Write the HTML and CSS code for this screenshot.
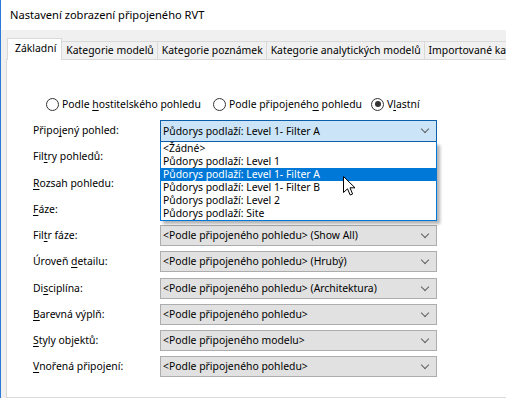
FILE: index.html
```html
<!DOCTYPE html>
<html lang="cs">
<head>
    <meta charset="UTF-8" />
    <title>Nastavení zobrazení připojeného RVT</title>
    <link rel="stylesheet" href="styles.css">
</head>
<body>

    <div class="window">
        <div class="titlebar">Nastavení zobrazení připojeného RVT</div>

        <div class="dialog">
            <div class="tabs">
                <div class="tab active">Základní</div>
                <div class="tab">Kategorie modelů</div>
                <div class="tab">Kategorie poznámek</div>
                <div class="tab">Kategorie analytických modelů</div>
                <div class="tab">Importované kategorie</div>
            </div>

            <div class="panel">
                <div class="radios">
                    <div class="radio r1"><span class="dot"></span><span>Podle <u>h</u>ostitelského pohledu</span></div>
                    <div class="radio r2"><span class="dot"></span><span>Podle připojenéh<u>o</u> pohledu</span></div>
                    <div class="radio r3"><span class="dot checked"></span><span>V<u>l</u>astní</span></div>
                </div>

                <div class="form">
                    <div class="row">
                        <label>Připo<u>j</u>ený pohled:</label>
                        <div class="combo focus">Půdorys podlaží: Level 1- Filter A<span class="chev"></span></div>
                        <ul class="droplist">
                            <li>&lt;Žádné&gt;</li>
                            <li>Půdorys podlaží: Level 1</li>
                            <li class="sel">Půdorys podlaží: Level 1- Filter A</li>
                            <li>Půdorys podlaží: Level 1- Filter B</li>
                            <li>Půdorys podlaží: Level 2</li>
                            <li>Půdorys podlaží: Site</li>
                        </ul>
                        <svg class="cursor" width="13" height="20" viewBox="0 0 13 20">
                            <path d="M0.5 0.5 L0.5 16.5 L4.5 12.8 L7.2 19 L9.6 18 L7 11.8 L12 11.8 Z" fill="#fff" stroke="#000" stroke-width="1"/>
                        </svg>
                    </div>
                    <div class="row"><label>Fil<u>t</u>ry pohledů:</label></div>
                    <div class="row"><label><u>R</u>ozsah pohledu:</label></div>
                    <div class="row"><label><u>F</u>áze:</label></div>
                    <div class="row">
                        <label>Fil<u>t</u>r fáze:</label>
                        <div class="combo">&lt;Podle připojeného pohledu&gt; (Show All)<span class="chev"></span></div>
                    </div>
                    <div class="row">
                        <label>Úroveň <u>d</u>etailu:</label>
                        <div class="combo">&lt;Podle připojeného pohledu&gt; (Hrubý)<span class="chev"></span></div>
                    </div>
                    <div class="row">
                        <label>Di<u>s</u>ciplína:</label>
                        <div class="combo">&lt;Podle připojeného pohledu&gt; (Architektura)<span class="chev"></span></div>
                    </div>
                    <div class="row">
                        <label><u>B</u>arevná výplň:</label>
                        <div class="combo">&lt;Podle připojeného pohledu&gt;<span class="chev"></span></div>
                    </div>
                    <div class="row">
                        <label><u>S</u>tyly objektů:</label>
                        <div class="combo">&lt;Podle připojeného modelu&gt;<span class="chev"></span></div>
                    </div>
                    <div class="row">
                        <label><u>V</u>nořená připojení:</label>
                        <div class="combo">&lt;Podle připojeného pohledu&gt;<span class="chev"></span></div>
                    </div>
                </div>
            </div>
        </div>
    </div>

</body>
</html>
```

FILE: styles.css
```css
body {
    margin: 0;
    font-family: "Noto Sans", "Open Sans", sans-serif;
    font-size: 10.4px;
    color: #000;
    background: #fff;
}

u {
    text-decoration-thickness: 1px;
    text-underline-offset: 2px;
}

.window {
    width: 506px;
    height: 398px;
    overflow: hidden;
    border-left: 1px solid #2b79d8;
    box-sizing: border-box;
    display: flex;
    flex-direction: column;
}

.titlebar {
    height: 30px;
    line-height: 30px;
    padding-left: 9px;
    font-size: 11.1px;
    background: #fff;
    flex: none;
}

.dialog {
    flex: 1;
    background: #f0f0f0;
    padding: 8px 0 0 5px;
    display: flex;
    flex-direction: column;
}

/* Tabs */
.tabs {
    display: flex;
    align-items: flex-end;
    height: 21px;
    white-space: nowrap;
}

.tab {
    height: 18px;
    line-height: 17px;
    padding: 0 3px 0 4px;
    border: 1px solid #d9d9d9;
    border-bottom: none;
    margin-left: -1px;
    background: #f0f0f0;
    box-sizing: border-box;
}

.tab.active {
    height: 22px;
    line-height: 19px;
    padding: 0 5px 0 7px;
    margin-left: 1px;
    margin-bottom: -1px;
    background: #fff;
    position: relative;
    z-index: 1;
}

.panel {
    flex: 1;
    background: #fff;
    border: 1px solid #d9d9d9;
    border-right: none;
    padding: 0 0 0 26px;
}

/* Radio buttons */
.radios {
    display: flex;
    align-items: center;
    height: 18px;
    margin-top: 35px;
    margin-left: 13px;
    white-space: nowrap;
}

.radio {
    display: flex;
    align-items: center;
}

.radio.r1 { width: 167px; }
.radio.r2 { width: 158px; }

.dot {
    width: 13px;
    height: 13px;
    border: 1px solid #333;
    border-radius: 50%;
    box-sizing: border-box;
    margin-right: 3px;
    position: relative;
    background: #fff;
    flex: none;
}

.dot.checked::after {
    content: "";
    position: absolute;
    left: 2.5px;
    top: 2.5px;
    width: 6px;
    height: 6px;
    border-radius: 50%;
    background: #333;
}

/* Form rows */
.form {
    margin-top: 7px;
}

.row {
    display: flex;
    align-items: flex-start;
    height: 26.25px;
    position: relative;
}

.row label {
    width: 127px;
    flex: none;
    height: 21px;
    line-height: 21px;
}

.combo {
    width: 277px;
    height: 21px;
    line-height: 19px;
    box-sizing: border-box;
    border: 1px solid #adadad;
    background: #e1e1e1;
    padding-left: 2px;
    position: relative;
    white-space: nowrap;
}

.combo.focus {
    height: 22px;
    line-height: 20px;
    border-color: #0d5ea8;
    background: #cce4f7;
}

.chev {
    position: absolute;
    right: 8px;
    top: 5px;
    width: 5px;
    height: 5px;
    border-right: 1px solid #606060;
    border-bottom: 1px solid #606060;
    transform: rotate(45deg);
}

/* Open dropdown list */
.droplist {
    position: absolute;
    left: 127px;
    top: 22px;
    width: 277px;
    margin: 0;
    padding: 0;
    list-style: none;
    border: 1px solid #0078d7;
    border-top: none;
    background: #fff;
    box-sizing: border-box;
    box-shadow: 3px 3px 3px rgba(0, 0, 0, 0.3);
    z-index: 5;
}

.droplist li {
    height: 13px;
    line-height: 13px;
    padding-left: 2px;
    white-space: nowrap;
}

.droplist li.sel {
    background: #0078d7;
    color: #fff;
}

.cursor {
    position: absolute;
    left: 310px;
    top: 56px;
    z-index: 6;
}
```
